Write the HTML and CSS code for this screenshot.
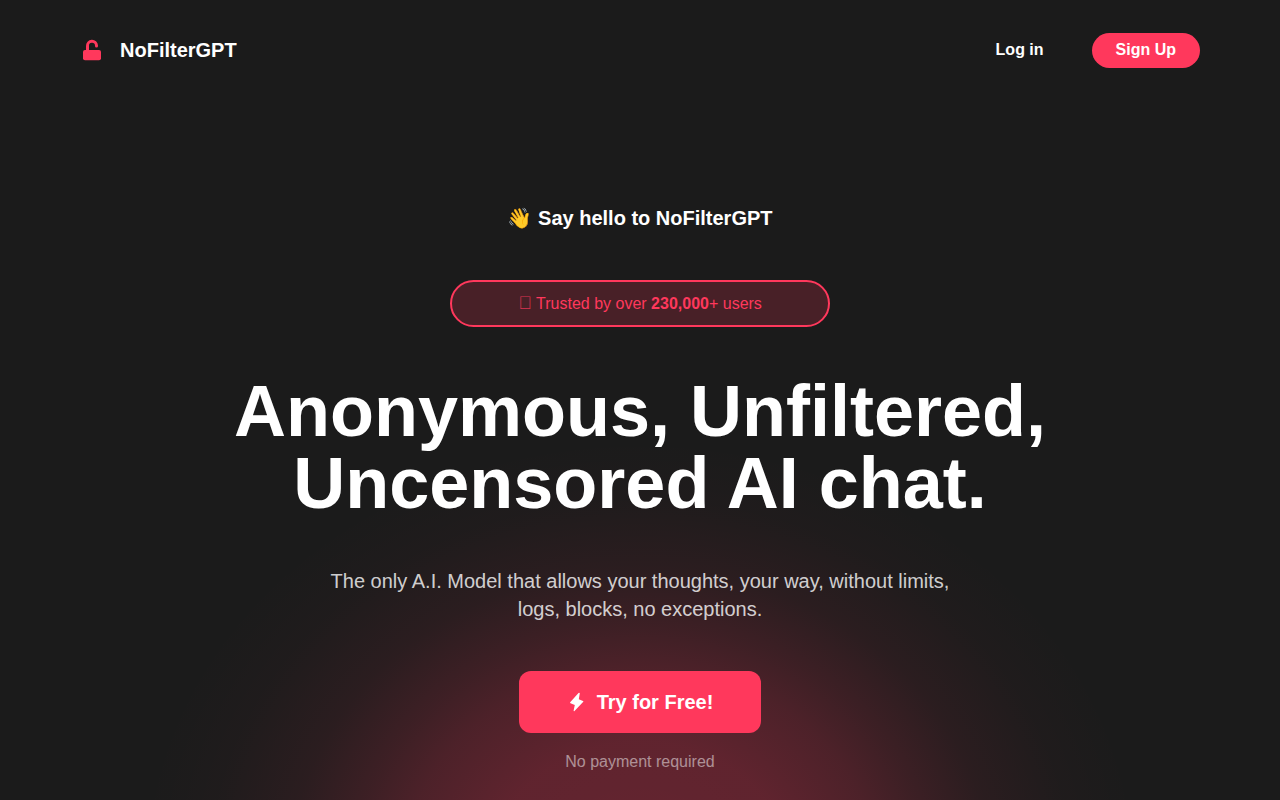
FILE: index.html
```html
<!DOCTYPE html>
<html lang="en">
<head>
    <meta charset="UTF-8">
    <meta name="viewport" content="width=device-width, initial-scale=1.0">
    <title>NoFilterGPT</title>
    <link rel="stylesheet" href="styles.css">
</head>
<body>
    <header class="navbar">
        <a class="brand" href="#">
            <svg class="brand-icon" viewBox="0 0 24 24" aria-hidden="true">
                <path d="M5 12H19A2 2 0 0 1 21 14V20.300A2 2 0 0 1 19 22.300H5A2 2 0 0 1 3 20.300V14A2 2 0 0 1 5 12Z" fill="currentColor"/>
                <path d="M7.500 13V8A4.500 4.500 0 0 1 16.500 7.600V8" fill="none" stroke="currentColor" stroke-width="3" stroke-linecap="round"/>
            </svg>
            <span>NoFilterGPT</span>
        </a>
        <nav class="nav-links">
            <a class="login" href="#">Log in</a>
            <a class="signup" href="#">Sign Up</a>
        </nav>
    </header>

    <main class="hero">
        <p class="hello">👋 Say hello to NoFilterGPT</p>
        <p class="trusted"><span class="trusted-icon">&#xf0c0;</span> Trusted by over <strong>230,000</strong>+ users</p>
        <h1>Anonymous, Unfiltered, Uncensored AI chat.</h1>
        <p class="lead">The only A.I. Model that allows your thoughts, your way, without limits, logs, blocks, no exceptions.</p>
        <button class="try-button" type="button">
            <svg class="bolt" viewBox="0 0 16 20" aria-hidden="true">
                <path d="M9.500 1L1.200 10.300Q0.800 10.900 1.500 11.200L5.800 13L4.600 18.800Q4.800 19.500 5.500 19L14.300 9.800Q14.700 9.200 14 8.900L9.800 7.200L10.800 1.300Q10.500 0.300 9.500 1Z" fill="currentColor"/>
            </svg>
            Try for Free!
        </button>
        <p class="note">No payment required</p>
    </main>
</body>
</html>
```
FILE: styles.css
```css
* {
    box-sizing: border-box;
}
body {
    min-height: 100vh;
    margin: 0;
    font-family: "Liberation Sans", Arial, sans-serif;
    font-size: 16px;
    line-height: 24px;
    color: #fff;
    background-color: #1b1b1b;
    background-image: radial-gradient(
        500px 430px at 50% calc(100% + 70px),
        rgba(255, 56, 92, 0.32) 0,
        rgba(255, 56, 92, 0.3) 30%,
        rgba(255, 56, 92, 0.22) 47%,
        rgba(255, 56, 92, 0.15) 57%,
        rgba(255, 56, 92, 0.07) 70%,
        rgba(255, 56, 92, 0.02) 86%,
        rgba(255, 56, 92, 0) 100%
    );
    background-repeat: no-repeat;
}
a {
    color: inherit;
    text-decoration: none;
}
h1,
p {
    margin: 0;
}
.navbar {
    display: flex;
    align-items: center;
    justify-content: space-between;
    height: 100px;
    padding: 0 80px;
}
.brand {
    display: flex;
    align-items: center;
    gap: 16px;
    font-size: 20px;
    font-weight: bold;
}
.brand-icon {
    width: 24px;
    height: 24px;
    color: #ff385c;
}
.nav-links {
    display: flex;
    align-items: center;
    gap: 48px;
    font-weight: bold;
}
.signup {
    padding: 5px 24px 6px;
    border-radius: 18px;
    background-color: #ff385c;
}
.hero {
    display: flex;
    flex-direction: column;
    align-items: center;
    max-width: 960px;
    margin: 0 auto;
    padding: 104px 20px 24px;
    text-align: center;
}
.hello {
    font-size: 20px;
    line-height: 28px;
    font-weight: bold;
}
.trusted {
    width: 100%;
    max-width: 380px;
    margin-top: 48px;
    padding: 10px 24px 9px;
    border: 2px solid #ff385c;
    border-radius: 24px;
    background-color: rgba(255, 56, 92, 0.2);
    color: #ff385c;
}
.trusted-icon {
    font-size: 18px;
    line-height: 1;
    opacity: 0.8;
}
h1 {
    margin-top: 48px;
    font-size: 72px;
    line-height: 72px;
}
.lead {
    max-width: 640px;
    margin-top: 48px;
    font-size: 20px;
    line-height: 28px;
    color: rgba(255, 255, 255, 0.8);
}
.try-button {
    display: flex;
    align-items: center;
    justify-content: center;
    gap: 12px;
    height: 62px;
    margin-top: 48px;
    padding: 0 48px 0 50px;
    border: 0;
    border-radius: 12px;
    background-color: #ff385c;
    color: #fff;
    font-family: inherit;
    font-size: 20px;
    font-weight: bold;
    cursor: pointer;
}
.bolt {
    width: 16px;
    height: 20px;
}
.note {
    margin-top: 17px;
    color: rgba(255, 255, 255, 0.5);
}
```
